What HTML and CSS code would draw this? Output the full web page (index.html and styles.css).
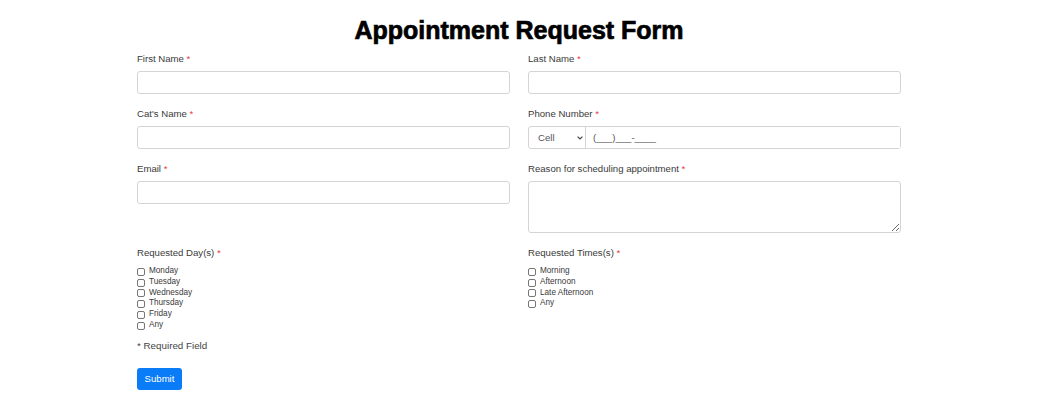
FILE: index.html
```html
<!DOCTYPE html>
<html lang="en">
<head>
  <meta charset="UTF-8" />
  <meta name="viewport" content="width=device-width, initial-scale=1.0" />
  <title>Appointment Request Form</title>
  <link rel="stylesheet" href="styles.css">
</head>
<body>
  <div class="container">
    <h1>Appointment Request Form</h1>

    <form class="form-grid" onsubmit="return false">
      <div class="field">
        <label>First Name <span class="req">*</span></label>
        <input type="text" />
      </div>
      <div class="field">
        <label>Last Name <span class="req">*</span></label>
        <input type="text" />
      </div>

      <div class="field">
        <label>Cat's Name <span class="req">*</span></label>
        <input type="text" />
      </div>
      <div class="field">
        <label>Phone Number <span class="req">*</span></label>
        <div class="phone">
          <div class="phone-type">
            <select>
              <option>Cell</option>
              <option>Home</option>
              <option>Work</option>
            </select>
            <svg class="chevron" width="6" height="4" viewBox="0 0 6 4"><path d="M0.6 0.6 L3 3 L5.4 0.6" fill="none" stroke="#444" stroke-width="1.2"/></svg>
          </div>
          <input type="text" class="phone-num" placeholder="(___)___-____" />
        </div>
      </div>

      <div class="field">
        <label>Email <span class="req">*</span></label>
        <input type="email" />
      </div>
      <div class="field">
        <label>Reason for scheduling appointment <span class="req">*</span></label>
        <textarea></textarea>
      </div>

      <div class="field">
        <label>Requested Day(s) <span class="req">*</span></label>
        <div class="checks">
          <label class="check"><input type="checkbox" /> Monday</label>
          <label class="check"><input type="checkbox" /> Tuesday</label>
          <label class="check"><input type="checkbox" /> Wednesday</label>
          <label class="check"><input type="checkbox" /> Thursday</label>
          <label class="check"><input type="checkbox" /> Friday</label>
          <label class="check"><input type="checkbox" /> Any</label>
        </div>
      </div>
      <div class="field">
        <label>Requested Times(s) <span class="req">*</span></label>
        <div class="checks">
          <label class="check"><input type="checkbox" /> Morning</label>
          <label class="check"><input type="checkbox" /> Afternoon</label>
          <label class="check"><input type="checkbox" /> Late Afternoon</label>
          <label class="check"><input type="checkbox" /> Any</label>
        </div>
      </div>
    </form>

    <p class="note">* Required Field</p>
    <button class="submit">Submit</button>
  </div>
</body>
</html>
```

FILE: styles.css
```css
html, body {
  margin: 0;
  padding: 0;
  background: #fff;
  font-family: "Liberation Sans", Arial, sans-serif;
  color: #333;
}
.container {
  width: 764px;
  margin-left: 137px;
}
h1 {
  margin: 16px 0 9px;
  font-size: 25px;
  line-height: 28px;
  font-weight: 900;
  text-align: center;
  color: #000;
  -webkit-text-stroke: 0.7px #000;
}
.form-grid {
  display: grid;
  grid-template-columns: 373px 373px;
  column-gap: 18px;
  row-gap: 14px;
  align-items: start;
}
.field {
  display: flex;
  flex-direction: column;
}
.field > label {
  font-size: 9.6px;
  line-height: 12px;
  margin-bottom: 6px;
  color: #3a3a3a;
}
.req {
  color: #e8383d;
}
input[type="text"], input[type="email"], textarea {
  box-sizing: border-box;
  width: 100%;
  height: 23px;
  margin: 0;
  padding: 3px 8px;
  border: 1px solid #d4d4d4;
  border-radius: 3px;
  font-family: inherit;
  font-size: 10px;
  background: #fff;
}
textarea {
  height: 52px;
  resize: vertical;
  display: block;
}
.phone {
  display: flex;
  height: 23px;
  box-sizing: border-box;
  border: 1px solid #d4d4d4;
  border-radius: 3px;
}
.phone-type {
  position: relative;
  width: 56px;
  border-right: 1px solid #d4d4d4;
}
.phone-type select {
  appearance: none;
  -webkit-appearance: none;
  width: 100%;
  height: 100%;
  border: none;
  background: transparent;
  padding: 0 0 0 9px;
  font-family: inherit;
  font-size: 9.6px;
  color: #555;
}
.chevron {
  position: absolute;
  right: 2px;
  top: 9px;
  pointer-events: none;
}
.phone .phone-num {
  flex: 1;
  height: 100%;
  border: none;
  border-radius: 0;
  padding: 0 7px;
  font-size: 9.6px;
}
.phone-num::placeholder {
  color: #555;
}
.checks {
  display: flex;
  flex-direction: column;
  margin-top: 1px;
}
.check {
  display: flex;
  align-items: center;
  gap: 4px;
  font-size: 8.2px;
  line-height: 10.8px;
  color: #3a3a3a;
}
.check input {
  appearance: none;
  -webkit-appearance: none;
  width: 8px;
  height: 8px;
  margin: 1px 0 0;
  border: 1px solid #767676;
  border-radius: 2px;
  background: #fff;
  box-sizing: border-box;
}
.note {
  margin: 9px 0 16px;
  font-size: 9.8px;
  line-height: 12px;
  color: #444;
}
.submit {
  display: block;
  width: 45px;
  height: 22px;
  padding: 0;
  border: none;
  border-radius: 3px;
  background: #0b7cf7;
  color: #fff;
  font-family: inherit;
  font-size: 9.6px;
  cursor: pointer;
}
```
